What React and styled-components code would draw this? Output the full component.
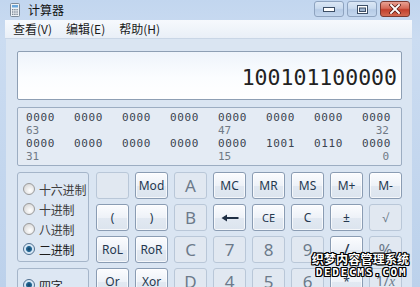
import React from "react"
import styled, { createGlobalStyle } from "styled-components"

const GlobalStyle = createGlobalStyle`
  html, body {
    margin: 0;
    padding: 0;
    background: #c4d7ee;
  }
  * {
    box-sizing: border-box;
  }
`

const cjk = `"Noto Sans CJK SC", "Noto Sans", sans-serif`
const latin = `"Noto Sans", "Open Sans", "Noto Sans CJK SC", sans-serif`
const mono = `"DejaVu Sans Mono", "Liberation Mono", monospace`

const Window = styled.div`
  position: relative;
  width: 420px;
  height: 287px;
  overflow: hidden;
  display: flex;
  flex-direction: column;
  background: linear-gradient(to bottom, #c2d6ef 0px, #cbdcf1 40px, #bcd1eb 287px);
`

const TitleBar = styled.div`
  height: 20px;
  flex: none;
  display: flex;
  align-items: center;
  padding-left: 10px;
`

const TitleText = styled.span`
  font-family: ${cjk};
  font-size: 12px;
  color: #111;
  margin-left: 8px;
  margin-top: -1px;
`

const Controls = styled.div`
  margin-left: auto;
  margin-right: 10px;
  margin-top: -2px;
  display: flex;
  gap: 3px;
`

const CtrlButton = styled.div`
  width: 30px;
  height: 16px;
  border-radius: 3px;
  border: 1px solid ${(p) => (p.$close ? "#7b3a31" : "#8ea3bf")};
  background: ${(p) =>
    p.$close
      ? "linear-gradient(to bottom, #e8a193 0%, #d56a58 45%, #c2402d 55%, #d36a52 100%)"
      : "linear-gradient(to bottom, #dbe7f5 0%, #c9daee 45%, #b6cbe6 55%, #c4d7ee 100%)"};
  display: flex;
  align-items: center;
  justify-content: center;
`

const MenuBar = styled.div`
  height: 19px;
  flex: none;
  margin: 0 8px 0 5px;
  background: linear-gradient(to bottom, #f6f9fd, #e9eff7);
  border-bottom: 1px solid #c9d6e6;
  display: flex;
  align-items: center;
  padding-left: 1px;
`

const MenuItem = styled.span`
  font-family: ${cjk};
  font-size: 12px;
  color: #1a1a1a;
  padding: 0 7px;
  line-height: 18px;
`

const Client = styled.div`
  flex: 1;
  margin: 0 8px 0 6px;
  background: #dae5f2;
  padding: 12px 10px 0 11px;
  display: flex;
  flex-direction: column;
`

const Display = styled.div`
  height: 49px;
  border: 1px solid #8e9fb4;
  border-radius: 2px;
  background: linear-gradient(to bottom, #eef4fb 0%, #fbfdff 55%, #ffffff 100%);
  display: flex;
  align-items: flex-end;
  justify-content: flex-end;
  padding: 0 4px 10px 0;
`

const DisplayValue = styled.span`
  font-family: ${mono};
  font-size: 21.5px;
  line-height: 22px;
  color: #222;
`

const BinaryPanel = styled.div`
  margin-top: 7px;
  height: 59px;
  border: 1px solid #9cadc2;
  border-radius: 2px;
  background: #e4ebf4;
  padding: 3px 0 0 8px;
  display: grid;
  grid-template-columns: repeat(7, 48px) 29px;
  grid-auto-rows: 13px;
  font-family: ${mono};
  font-size: 11px;
  line-height: 13px;
`

const Bits = styled.span`
  color: #3b4450;
  letter-spacing: 0.6px;
`

const BitLabel = styled.span`
  color: #707a86;
  grid-column: ${(p) => p.$col};
  justify-self: ${(p) => (p.$end ? "end" : "start")};
  margin-right: ${(p) => (p.$end ? "2px" : "0")};
`

const Lower = styled.div`
  margin-top: 6px;
  display: flex;
  gap: 7px;
`

const RadioColumn = styled.div`
  width: 72px;
  flex: none;
  display: flex;
  flex-direction: column;
  gap: 6px;
`

const GroupBox = styled.div`
  height: ${(p) => p.$h}px;
  border: 1px solid #a5b5c9;
  border-radius: 3px;
  background: #dde7f3;
  padding: 6px 0 0 4px;
  display: flex;
  flex-direction: column;
`

const RadioRow = styled.div`
  height: 20px;
  display: flex;
  align-items: center;
  gap: 4px;
  white-space: nowrap;
  font-family: ${cjk};
  font-size: 12px;
  letter-spacing: -0.2px;
  color: ${(p) => (p.$checked ? "#1c1c1c" : "#3d3d3d")};
`

const RadioDot = styled.span`
  width: 12px;
  height: 12px;
  border-radius: 50%;
  flex: none;
  margin-left: 1px;
  border: 1px solid ${(p) => (p.$checked ? "#4f6f8f" : "#9a9a9a")};
  background: ${(p) =>
    p.$checked
      ? "radial-gradient(circle, #0f3f63 0, #2a6c98 2.6px, #cfe3f4 3.4px, #f2f7fc 100%)"
      : "radial-gradient(circle at 60% 65%, #ffffff 0, #e9e9e9 45%, #cfcfcf 100%)"};
`

const KeyGrid = styled.div`
  display: grid;
  grid-template-columns: repeat(8, 33px);
  grid-auto-rows: 27px;
  column-gap: 6px;
  row-gap: 5px;
`

const Key = styled.div`
  border-radius: 3px;
  display: flex;
  align-items: center;
  justify-content: center;
  font-family: ${latin};
  font-size: ${(p) => (p.$big ? 17 : p.$small ? 11 : 12)}px;
  font-weight: 400;
  color: ${(p) => (p.$off ? "#6c7a8a" : "#25384f")};
  border: 1px solid ${(p) => (p.$off ? "#b9c7d8" : "#8a9cb3")};
  background: ${(p) =>
    p.$off
      ? "#e1e8f1"
      : "linear-gradient(to bottom, #fbfcfe 0%, #eef2f8 50%, #e2e9f2 51%, #dce4ee 100%)"};
  box-shadow: ${(p) => (p.$off ? "none" : "inset 0 0 0 1px rgba(255,255,255,0.7)")};
  line-height: 1;
`

const Recip = styled.span`
  font-size: 14px;
`

const Italic = styled.i`
  font-family: "Liberation Serif", serif;
  font-size: 14px;
`

const Watermark = styled.div`
  position: absolute;
  left: 311px;
  top: 251px;
  display: flex;
  flex-direction: column;
  align-items: center;
  width: 99px;
  color: #fff;
  font-weight: 700;
  text-shadow: -1px -1px 0 #000, 1px -1px 0 #000, -1px 1px 0 #000, 1px 1px 0 #000,
    0 1px 0 #000, 1px 0 0 #000, 0 -1px 0 #000, -1px 0 0 #000;
  pointer-events: none;
`

const WatermarkCn = styled.span`
  font-family: ${cjk};
  font-size: 12px;
  line-height: 15px;
  letter-spacing: 0.2px;
`

const WatermarkEn = styled.span`
  font-family: ${mono};
  font-size: 11px;
  line-height: 13px;
  letter-spacing: 1.7px;
  margin-left: 2px;
`

const CalcIcon = () => (
  <svg width="10" height="14" viewBox="0 0 10 14">
    <rect x="0.5" y="0.5" width="9" height="13" rx="1" fill="#eef2f6" stroke="#7d8a99" />
    <rect x="2" y="2" width="6" height="2.5" fill="#6aa7dc" />
    {[0, 1, 2].map((r) =>
      [0, 1, 2].map((c) => (
        <rect key={`${r}-${c}`} x={2 + c * 2.2} y={6 + r * 2.3} width="1.4" height="1.4" fill="#7b8794" />
      ))
    )}
  </svg>
)

const BackArrow = () => (
  <svg width="18" height="8" viewBox="0 0 18 8">
    <path d="M0.5 4 L6 0.5 L6 3 L17.5 3 L17.5 5 L6 5 L6 7.5 Z" fill="#1f2f44" />
  </svg>
)

const bitsTop = ["0000", "0000", "0000", "0000", "0000", "0000", "0000", "0000"]
const bitsBottom = ["0000", "0000", "0000", "0000", "0000", "1001", "0110", "0000"]

const keys = [
  { t: "", off: true },
  { t: "Mod" },
  { t: "A", off: true, big: true },
  { t: "MC" },
  { t: "MR" },
  { t: "MS" },
  { t: "M+" },
  { t: "M-" },
  { t: "(" },
  { t: ")" },
  { t: "B", off: true, big: true },
  { t: "back" },
  { t: "CE", small: true },
  { t: "C" },
  { t: "±" },
  { t: "√", off: true },
  { t: "RoL" },
  { t: "RoR" },
  { t: "C", off: true, big: true },
  { t: "7", off: true, big: true },
  { t: "8", off: true, big: true },
  { t: "9", off: true, big: true },
  { t: "/", big: true },
  { t: "%", off: true, big: true },
  { t: "Or" },
  { t: "Xor" },
  { t: "D", off: true, big: true },
  { t: "4", off: true, big: true },
  { t: "5", off: true, big: true },
  { t: "6", off: true, big: true },
  { t: "*" },
  { t: "1/x", off: true },
]

const App = () => {
  return (
    <>
      <GlobalStyle />
      <Window>
        <TitleBar>
          <CalcIcon />
          <TitleText>计算器</TitleText>
          <Controls>
            <CtrlButton>
              <svg width="12" height="6" viewBox="0 0 12 6">
                <rect x="0.5" y="1.5" width="11" height="4" fill="#fff" stroke="#3d4f66" />
              </svg>
            </CtrlButton>
            <CtrlButton>
              <svg width="11" height="9" viewBox="0 0 11 9">
                <rect x="0.5" y="0.5" width="10" height="8" fill="#fff" stroke="#3d4f66" />
                <rect x="2.5" y="3" width="6" height="3.5" fill="#9fb4cf" stroke="#3d4f66" />
              </svg>
            </CtrlButton>
            <CtrlButton $close>
              <svg width="12" height="10" viewBox="0 0 12 10">
                <path d="M2 1 L10 9 M10 1 L2 9" stroke="#5a1d15" strokeWidth="3.4" strokeLinecap="square" />
                <path d="M2 1 L10 9 M10 1 L2 9" stroke="#fff" strokeWidth="1.9" strokeLinecap="square" />
              </svg>
            </CtrlButton>
          </Controls>
        </TitleBar>
        <MenuBar>
          <MenuItem>查看(V)</MenuItem>
          <MenuItem>编辑(E)</MenuItem>
          <MenuItem>帮助(H)</MenuItem>
        </MenuBar>
        <Client>
          <Display>
            <DisplayValue>100101100000</DisplayValue>
          </Display>
          <BinaryPanel>
            {bitsTop.map((b, i) => (
              <Bits key={`t${i}`}>{b}</Bits>
            ))}
            <BitLabel $col={1}>63</BitLabel>
            <BitLabel $col={5}>47</BitLabel>
            <BitLabel $col={8} $end>32</BitLabel>
            {bitsBottom.map((b, i) => (
              <Bits key={`b${i}`}>{b}</Bits>
            ))}
            <BitLabel $col={1}>31</BitLabel>
            <BitLabel $col={5}>15</BitLabel>
            <BitLabel $col={8} $end>0</BitLabel>
          </BinaryPanel>
          <Lower>
            <RadioColumn>
              <GroupBox $h={90}>
                <RadioRow>
                  <RadioDot />
                  十六进制
                </RadioRow>
                <RadioRow>
                  <RadioDot />
                  十进制
                </RadioRow>
                <RadioRow>
                  <RadioDot />
                  八进制
                </RadioRow>
                <RadioRow $checked>
                  <RadioDot $checked />
                  二进制
                </RadioRow>
              </GroupBox>
              <GroupBox $h={60}>
                <RadioRow $checked>
                  <RadioDot $checked />
                  四字
                </RadioRow>
              </GroupBox>
            </RadioColumn>
            <KeyGrid>
              {keys.map((k, i) => (
                <Key key={i} $off={k.off} $big={k.big} $small={k.small}>
                  {k.t === "back" ? (
                    <BackArrow />
                  ) : k.t === "1/x" ? (
                    <Recip>
                      1/<Italic>x</Italic>
                    </Recip>
                  ) : (
                    k.t
                  )}
                </Key>
              ))}
            </KeyGrid>
          </Lower>
        </Client>
        <Watermark>
          <WatermarkCn>织梦内容管理系统</WatermarkCn>
          <WatermarkEn>DEDECMS.COM</WatermarkEn>
        </Watermark>
      </Window>
    </>
  )
}

export default App
